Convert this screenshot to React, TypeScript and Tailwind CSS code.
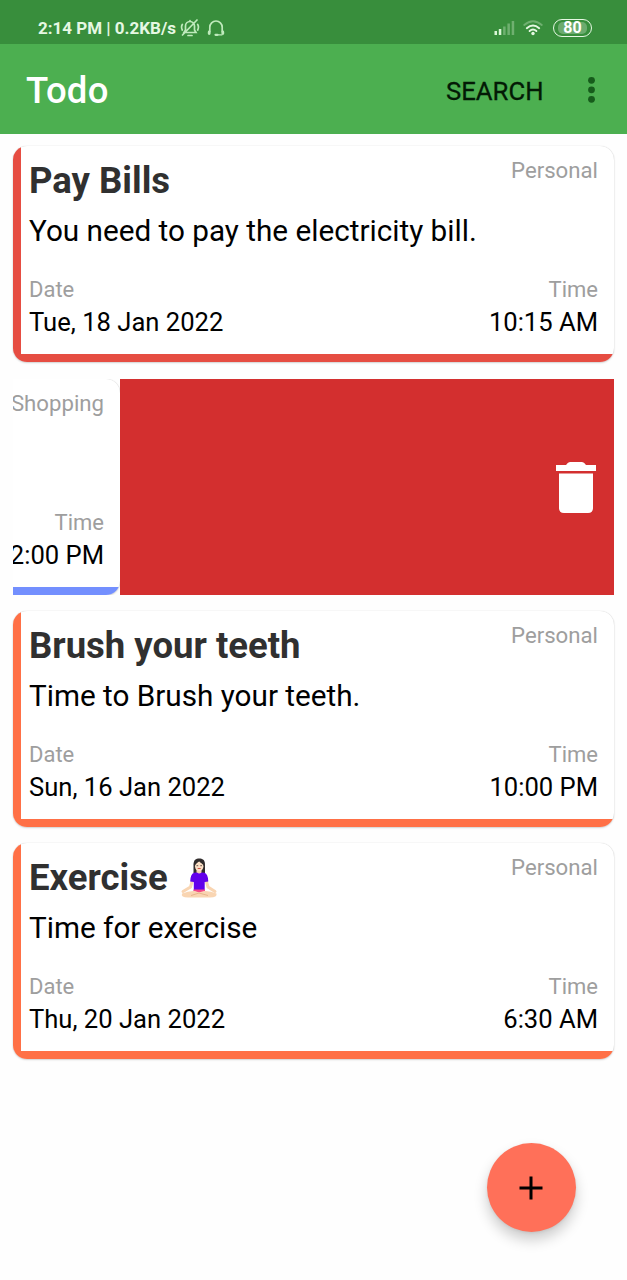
import React from "react";

type Todo = {
  title: string;
  description: string;
  category: string;
  date: string;
  time: string;
  accent: string;
  emoji?: boolean;
};

function LotusEmoji() {
  return (
    <svg className="ml-[11.5px] h-[44px] w-[40px] shrink-0" viewBox="0 0 40 44">
      <path d="M14.5 17V8.500C14.500 4 17 2.500 20.200 2.500S26 4 26 8.500V17Z" fill="#312d2d" />
      <path d="M17.500 13h5v5h-5z" fill="#f3cfae" />
      <ellipse cx="20.200" cy="10.200" rx="4.200" ry="5" fill="#fbe0c6" />
      <path d="M15.800 9.500C17 7.500 18.500 6.500 20.200 5.200 21.500 7 23.500 7.500 24.500 9.500V4.500H16Z" fill="#312d2d" />
      <path d="M17.500 9.700h1.700M21.300 9.700H23" stroke="#4a3730" strokeWidth=".8" />
      <path d="M18.700 12.500h3" stroke="#cf5148" strokeWidth="1" />
      <path d="M13.500 24 11.500 31 4 35.500M27 24l2 7 7 4.500" fill="none" stroke="#f9d5b2" strokeWidth="3" strokeLinecap="round" />
      <path d="M15 16.800 18 16.500q2.200 2 4.500 0l3 .3q3.500 1 3.800 8.700L25.700 26v9H14.800v-9l-3.600-.5q.3-7.700 3.800-8.700Z" fill="#6200ea" />
      <path d="M14.500 33.500h11.500v3H14.500Z" fill="#f3488a" />
      <path d="M3 37.500Q10 34.500 16 35L20 36.500 25 35Q31 34.500 37.500 37.500 38.500 41.500 31 41.500H9Q1.500 41.500 3 37.500Z" fill="#f9d5b2" />
      <path d="m12 39.500 8-2.500 9 2.500" fill="none" stroke="#e3ab80" strokeWidth=".8" />
    </svg>
  );
}

function TodoCard({ todo }: { todo: Todo }) {
  return (
    <article className="flex h-[216px] w-[601px] shrink-0 flex-col overflow-hidden rounded-[14px] bg-white shadow-[0_0_1px_rgba(0,0,0,0.2),0_1px_2px_rgba(0,0,0,0.16)]">
      <div className="flex h-[208px]">
        <div className={`w-[8px] shrink-0 ${todo.accent}`} />
        <div className="flex flex-1 flex-col pt-[15px] pr-[16px] pl-[8px]">
          <div className="flex h-[40px] justify-between">
            <h2 className="flex items-center text-[36.5px] leading-[40px] font-bold whitespace-pre text-[#303030]">
              {todo.title}
              {todo.emoji && <LotusEmoji />}
            </h2>
            <span className="-mt-[4px] text-[22.2px] leading-[26px] text-[#9e9e9e]">{todo.category}</span>
          </div>
          <p className="mt-[12px] h-[36px] text-[29.7px] leading-[36px] whitespace-nowrap">{todo.description}</p>
          <div className="mt-[28px] flex justify-between text-[22px] leading-[26px] text-[#9e9e9e]">
            <span>{todo.date && "Date"}</span>
            <span>Time</span>
          </div>
          <div className="mt-[4px] flex justify-between text-[25.6px] leading-[30px]">
            <span>{todo.date}</span>
            <span>{todo.time}</span>
          </div>
        </div>
      </div>
      <div className={`h-[8px] ${todo.accent}`} />
    </article>
  );
}

const payBills: Todo = {
  title: "Pay Bills",
  description: "You need to pay the electricity bill.",
  category: "Personal",
  date: "Tue, 18 Jan 2022",
  time: "10:15 AM",
  accent: "bg-[#e64d42]",
};
const shopping: Todo = {
  title: "",
  description: "",
  category: "Shopping",
  date: "",
  time: "12:00 PM",
  accent: "bg-[#738ffe]",
};
const brush: Todo = {
  title: "Brush your teeth",
  description: "Time to Brush your teeth.",
  category: "Personal",
  date: "Sun, 16 Jan 2022",
  time: "10:00 PM",
  accent: "bg-[#ff7046]",
};
const exercise: Todo = {
  title: "Exercise",
  description: "Time for exercise",
  category: "Personal",
  date: "Thu, 20 Jan 2022",
  time: "6:30 AM",
  accent: "bg-[#ff7046]",
  emoji: true,
};

function StatusBar() {
  return (
    <div className="flex h-[44px] items-center bg-[#388e3c] pt-[12px] pr-[35px] pl-[38px] text-[#e6f8e3]">
      <span className="w-[139px] text-[17px] leading-[20px] font-bold whitespace-nowrap">2:14 PM | 0.2KB/s</span>
      <svg className="ml-[3px] h-[18px] w-[20px]" viewBox="0 0 20 18" fill="none" stroke="#bfeabc" strokeWidth="1.700" strokeLinecap="round">
        <path d="M4 13.500h12L14.500 11V7a4.500 4.500 0 0 0-9 0V11ZM8 16.500h4M2.300 5.500Q.8 8 2.300 11M17.700 5.500Q19.200 8 17.700 11M10 2.500V1.500M2.500 16 17 1" />
      </svg>
      <svg className="ml-[7px] h-[18px] w-[18px]" viewBox="0 0 18 18" fill="none" stroke="#bfeabc" strokeWidth="1.700" strokeLinecap="round">
        <path d="M2.800 12.500V8.200a6.200 6.200 0 0 1 12.400 0v4.300" />
        <path d="M2.200 13V14.500M15.800 13V14.500" strokeWidth="2.800" />
        <path d="M8.500 15.800h2" strokeWidth="2.200" />
        <path d="M11 15.800H15" strokeWidth="1.200" />
      </svg>
      <div className="flex-1" />
      <svg className="h-[16px] w-[21px]" viewBox="0 0 21 16">
        <path d="M.5 11h2.500v4H.5zM4.800 9h2.500v6H4.800z" fill="#d9f6d5" />
        <path d="M9.100 6.500h2.500V15H9.100zM13.400 3.500h2.500V15h-2.500zM17.700 1h2.500v14h-2.500z" fill="#6fb070" />
      </svg>
      <svg className="ml-[8px] h-[16px] w-[20px]" viewBox="0 0 20 16" fill="none" strokeLinecap="round">
        <path d="M1.200 5Q10-2.500 18.800 5" stroke="#6fb070" strokeWidth="1.800" />
        <path d="M3.800 8.200q6.200-5.500 12.400 0M6.600 11q3.400-3 6.800 0" stroke="#e6f8e3" strokeWidth="1.900" />
        <circle cx="10" cy="13.500" r="1.700" fill="#e6f8e3" />
      </svg>
      <div className="ml-[10px] flex h-[18px] w-[39px] items-center justify-center rounded-full border-[1.7px] border-[#e6f8e3]">
        <span className="flex h-[12px] w-[29px] items-center justify-center rounded-[5px] bg-[#6cab6e] text-[16px] leading-[12px] font-bold text-white">80</span>
      </div>
    </div>
  );
}

export default function App() {
  return (
    <div className="flex h-[1280px] w-[627px] flex-col overflow-hidden bg-[#fefefe] font-['Roboto',sans-serif] text-black">
      <StatusBar />
      <header className="flex h-[89.500px] shrink-0 items-center bg-[#4caf50] pt-[4px] pl-[26px]">
        <h1 className="text-[36.5px] leading-[44px] font-medium tracking-[0.2px] text-white">Todo</h1>
        <div className="flex-1" />
        <button className="text-[25.7px] leading-[30px] text-[#031a05] [-webkit-text-stroke:0.3px_#031a05]">SEARCH</button>
        <svg className="mr-[31px] ml-[43.500px] h-[30px] w-[9px]" viewBox="0 0 9 30" fill="#165c1b">
          <circle cx="4.500" cy="4.300" r="3.400" />
          <circle cx="4.500" cy="13.800" r="3.400" />
          <circle cx="4.500" cy="23.300" r="3.400" />
        </svg>
      </header>
      <main className="flex flex-1 flex-col pt-[12.500px] pl-[13px]">
        <TodoCard todo={payBills} />
        <div className="mt-[17px] flex h-[216px] w-[601px] shrink-0">
          <div className="flex w-[107px] shrink-0 justify-end overflow-hidden">
            <TodoCard todo={shopping} />
          </div>
          <div className="flex flex-1 items-center justify-end bg-[#d32f2f] pr-[18px]">
            <svg className="h-[51px] w-[40px]" viewBox="0 0 40 51" fill="white">
              <path d="M0 3h10q2-3 4-3h12q2 0 4 3h10v6H0ZM3 11.500h34V46q0 5-5 5H8q-5 0-5-5Z" />
            </svg>
          </div>
        </div>
        <div className="mt-[16px] flex flex-col gap-[16px]">
          <TodoCard todo={brush} />
          <TodoCard todo={exercise} />
        </div>
        <button className="mt-[84px] mr-[51.500px] flex h-[89px] w-[89px] shrink-0 items-center justify-center self-end rounded-full bg-[#ff7059] shadow-[0_8px_14px_rgba(0,0,0,0.2),0_1px_3px_rgba(0,0,0,0.08)]">
          <svg className="h-[24px] w-[24px]" viewBox="0 0 24 24" stroke="black" strokeWidth="3">
            <path d="M.5 12h23M12 .5v23" />
          </svg>
        </button>
      </main>
    </div>
  );
}
